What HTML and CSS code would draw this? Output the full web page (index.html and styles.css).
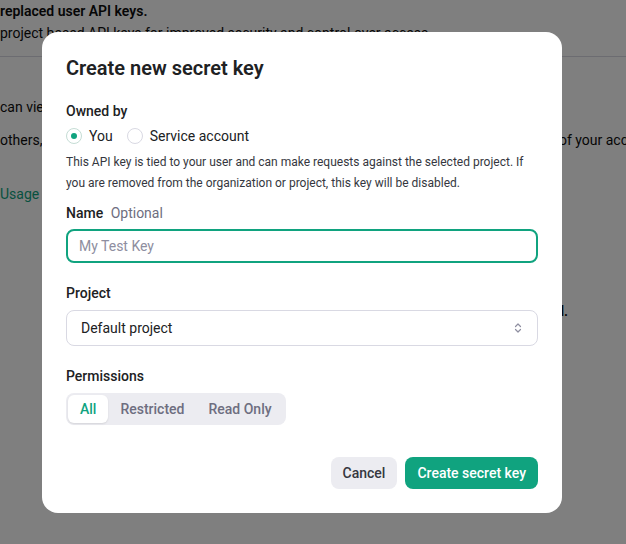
FILE: index.html
```html
<!DOCTYPE html>
<html lang="en">
<head>
    <meta charset="UTF-8">
    <meta name="viewport" content="width=device-width, initial-scale=1.0">
    <title>Create new secret key</title>
    <link rel="stylesheet" href="styles.css">
</head>
<body>
    <div class="page">
        <div class="notice">
            <p class="notice-title">replaced user API keys.</p>
            <p class="notice-text">project based API keys for improved security and control over access.</p>
        </div>
        <div class="page-body">
            <div class="row row-1"><span>can view</span></div>
            <div class="row row-2"><span>others,</span><span>of your account</span></div>
            <div class="row row-3"><span class="link">Usage page</span></div>
            <div class="row row-4"><span class="strong">l.</span></div>
        </div>
    </div>

    <div class="overlay">
        <div class="modal">
            <h2 class="modal-title">Create new secret key</h2>

            <div class="field owned">
                <div class="label">Owned by</div>
                <div class="radios">
                    <label class="radio"><span class="radio-dot checked"></span>You</label>
                    <label class="radio"><span class="radio-dot"></span>Service account</label>
                </div>
                <p class="hint">This API key is tied to your user and can make requests against the selected project. If you are removed from the organization or project, this key will be disabled.</p>
            </div>

            <div class="field name">
                <div class="label">Name <span class="optional">Optional</span></div>
                <input class="text-input" type="text" placeholder="My Test Key">
            </div>

            <div class="field">
                <div class="label">Project</div>
                <div class="select">
                    <span>Default project</span>
                    <svg width="10" height="12" viewBox="0 0 10 12" fill="none" stroke="#8e8ea0" stroke-width="1.2" stroke-linecap="round" stroke-linejoin="round">
                        <path d="M2.5 4.5 L5 2 L7.5 4.5"/>
                        <path d="M2.5 7.5 L5 10 L7.5 7.5"/>
                    </svg>
                </div>
            </div>

            <div class="field">
                <div class="label">Permissions</div>
                <div class="segmented">
                    <span class="segment active">All</span>
                    <span class="segment">Restricted</span>
                    <span class="segment">Read Only</span>
                </div>
            </div>

            <div class="actions">
                <button class="btn btn-secondary">Cancel</button>
                <button class="btn btn-primary">Create secret key</button>
            </div>
        </div>
    </div>
</body>
</html>
```

FILE: styles.css
```css
body {
    margin: 0;
    font-family: Roboto, "Liberation Sans", sans-serif;
    color: #0d0d0d;
    background: white;
    height: 544px;
    overflow: hidden;
}
.page {
    font-size: 14px;
}
.notice {
    border-bottom: 1px solid #d9d9e3;
    height: 56px;
}
.notice p {
    margin: 0;
    line-height: 22px;
    white-space: nowrap;
}
.notice-title {
    font-weight: 600;
}
.page-body {
    padding-top: 40px;
}
.row {
    line-height: 20px;
    white-space: nowrap;
}
.row-1 {
    margin-bottom: 13px;
}
.row-2 {
    display: flex;
    justify-content: space-between;
    margin-bottom: 34px;
}
.row-2 span:last-child {
    margin-right: -30px;
}
.row-3 {
    margin-bottom: 97px;
}
.row-4 {
    text-align: right;
    padding-right: 58px;
}
.link {
    color: #10a37f;
}
.strong {
    font-weight: 600;
}

.overlay {
    position: fixed;
    inset: 0;
    background: rgba(0,0,0,0.5);
    display: flex;
    align-items: center;
    padding-left: 42px;
}
.modal {
    width: 472px;
    padding: 24px;
    background: white;
    border-radius: 16px;
}
.modal-title {
    margin: 0;
    font-size: 20px;
    line-height: 24px;
    font-weight: 600;
    color: #202123;
}
.field {
    margin-top: 20px;
}
.field.owned {
    margin-top: 21px;
}
.field.name {
    margin-top: 9px;
}
.label {
    font-size: 14px;
    line-height: 20px;
    font-weight: 500;
    color: #202123;
    margin-bottom: 7px;
}
.name .label {
    margin-bottom: 6px;
}
.optional {
    font-weight: 400;
    color: #6e6e80;
    margin-left: 4px;
}
.owned .label {
    margin-bottom: 5px;
}
.radios {
    display: flex;
    gap: 14px;
    font-size: 14px;
    line-height: 20px;
    color: #202123;
}
.radio {
    display: flex;
    align-items: center;
    gap: 7px;
}
.radio-dot {
    width: 14px;
    height: 14px;
    border: 1px solid #d9d9e3;
    border-radius: 50%;
    display: flex;
    align-items: center;
    justify-content: center;
}
.radio-dot.checked {
    border-color: #c5ddd5;
}
.radio-dot.checked::after {
    content: "";
    width: 6px;
    height: 6px;
    border-radius: 50%;
    background: #10a37f;
}
.hint {
    margin: 6px 0 0 0;
    font-size: 12px;
    line-height: 21px;
    color: #353740;
}
.text-input {
    display: block;
    box-sizing: border-box;
    width: 100%;
    height: 34px;
    border: 2px solid #10a37f;
    border-radius: 8px;
    padding: 0 11px;
    font-family: inherit;
    font-size: 14px;
    color: #202123;
    outline: none;
}
.text-input::placeholder {
    color: #8e8ea0;
}
.select {
    box-sizing: border-box;
    height: 36px;
    border: 1px solid #d9d9e3;
    border-radius: 8px;
    padding: 0 14px;
    display: flex;
    align-items: center;
    justify-content: space-between;
    font-size: 14px;
    color: #202123;
}
.segmented {
    display: inline-flex;
    padding: 2px;
    background: #ececf1;
    border-radius: 8px;
}
.segment {
    height: 28px;
    line-height: 28px;
    padding: 0 12px;
    font-size: 14px;
    font-weight: 500;
    color: #6e6e80;
    border-radius: 6px;
}
.segment.active {
    background: white;
    color: #10a37f;
    box-shadow: 0 1px 2px rgba(0,0,0,0.1);
}
.actions {
    display: flex;
    justify-content: flex-end;
    gap: 8px;
    margin-top: 32px;
}
.btn {
    height: 32px;
    padding: 0 12px;
    border: none;
    border-radius: 8px;
    font-family: inherit;
    font-size: 14px;
    font-weight: 500;
    cursor: pointer;
}
.btn-secondary {
    background: #ececf1;
    color: #353740;
}
.btn-primary {
    background: #10a37f;
    color: white;
}
```
